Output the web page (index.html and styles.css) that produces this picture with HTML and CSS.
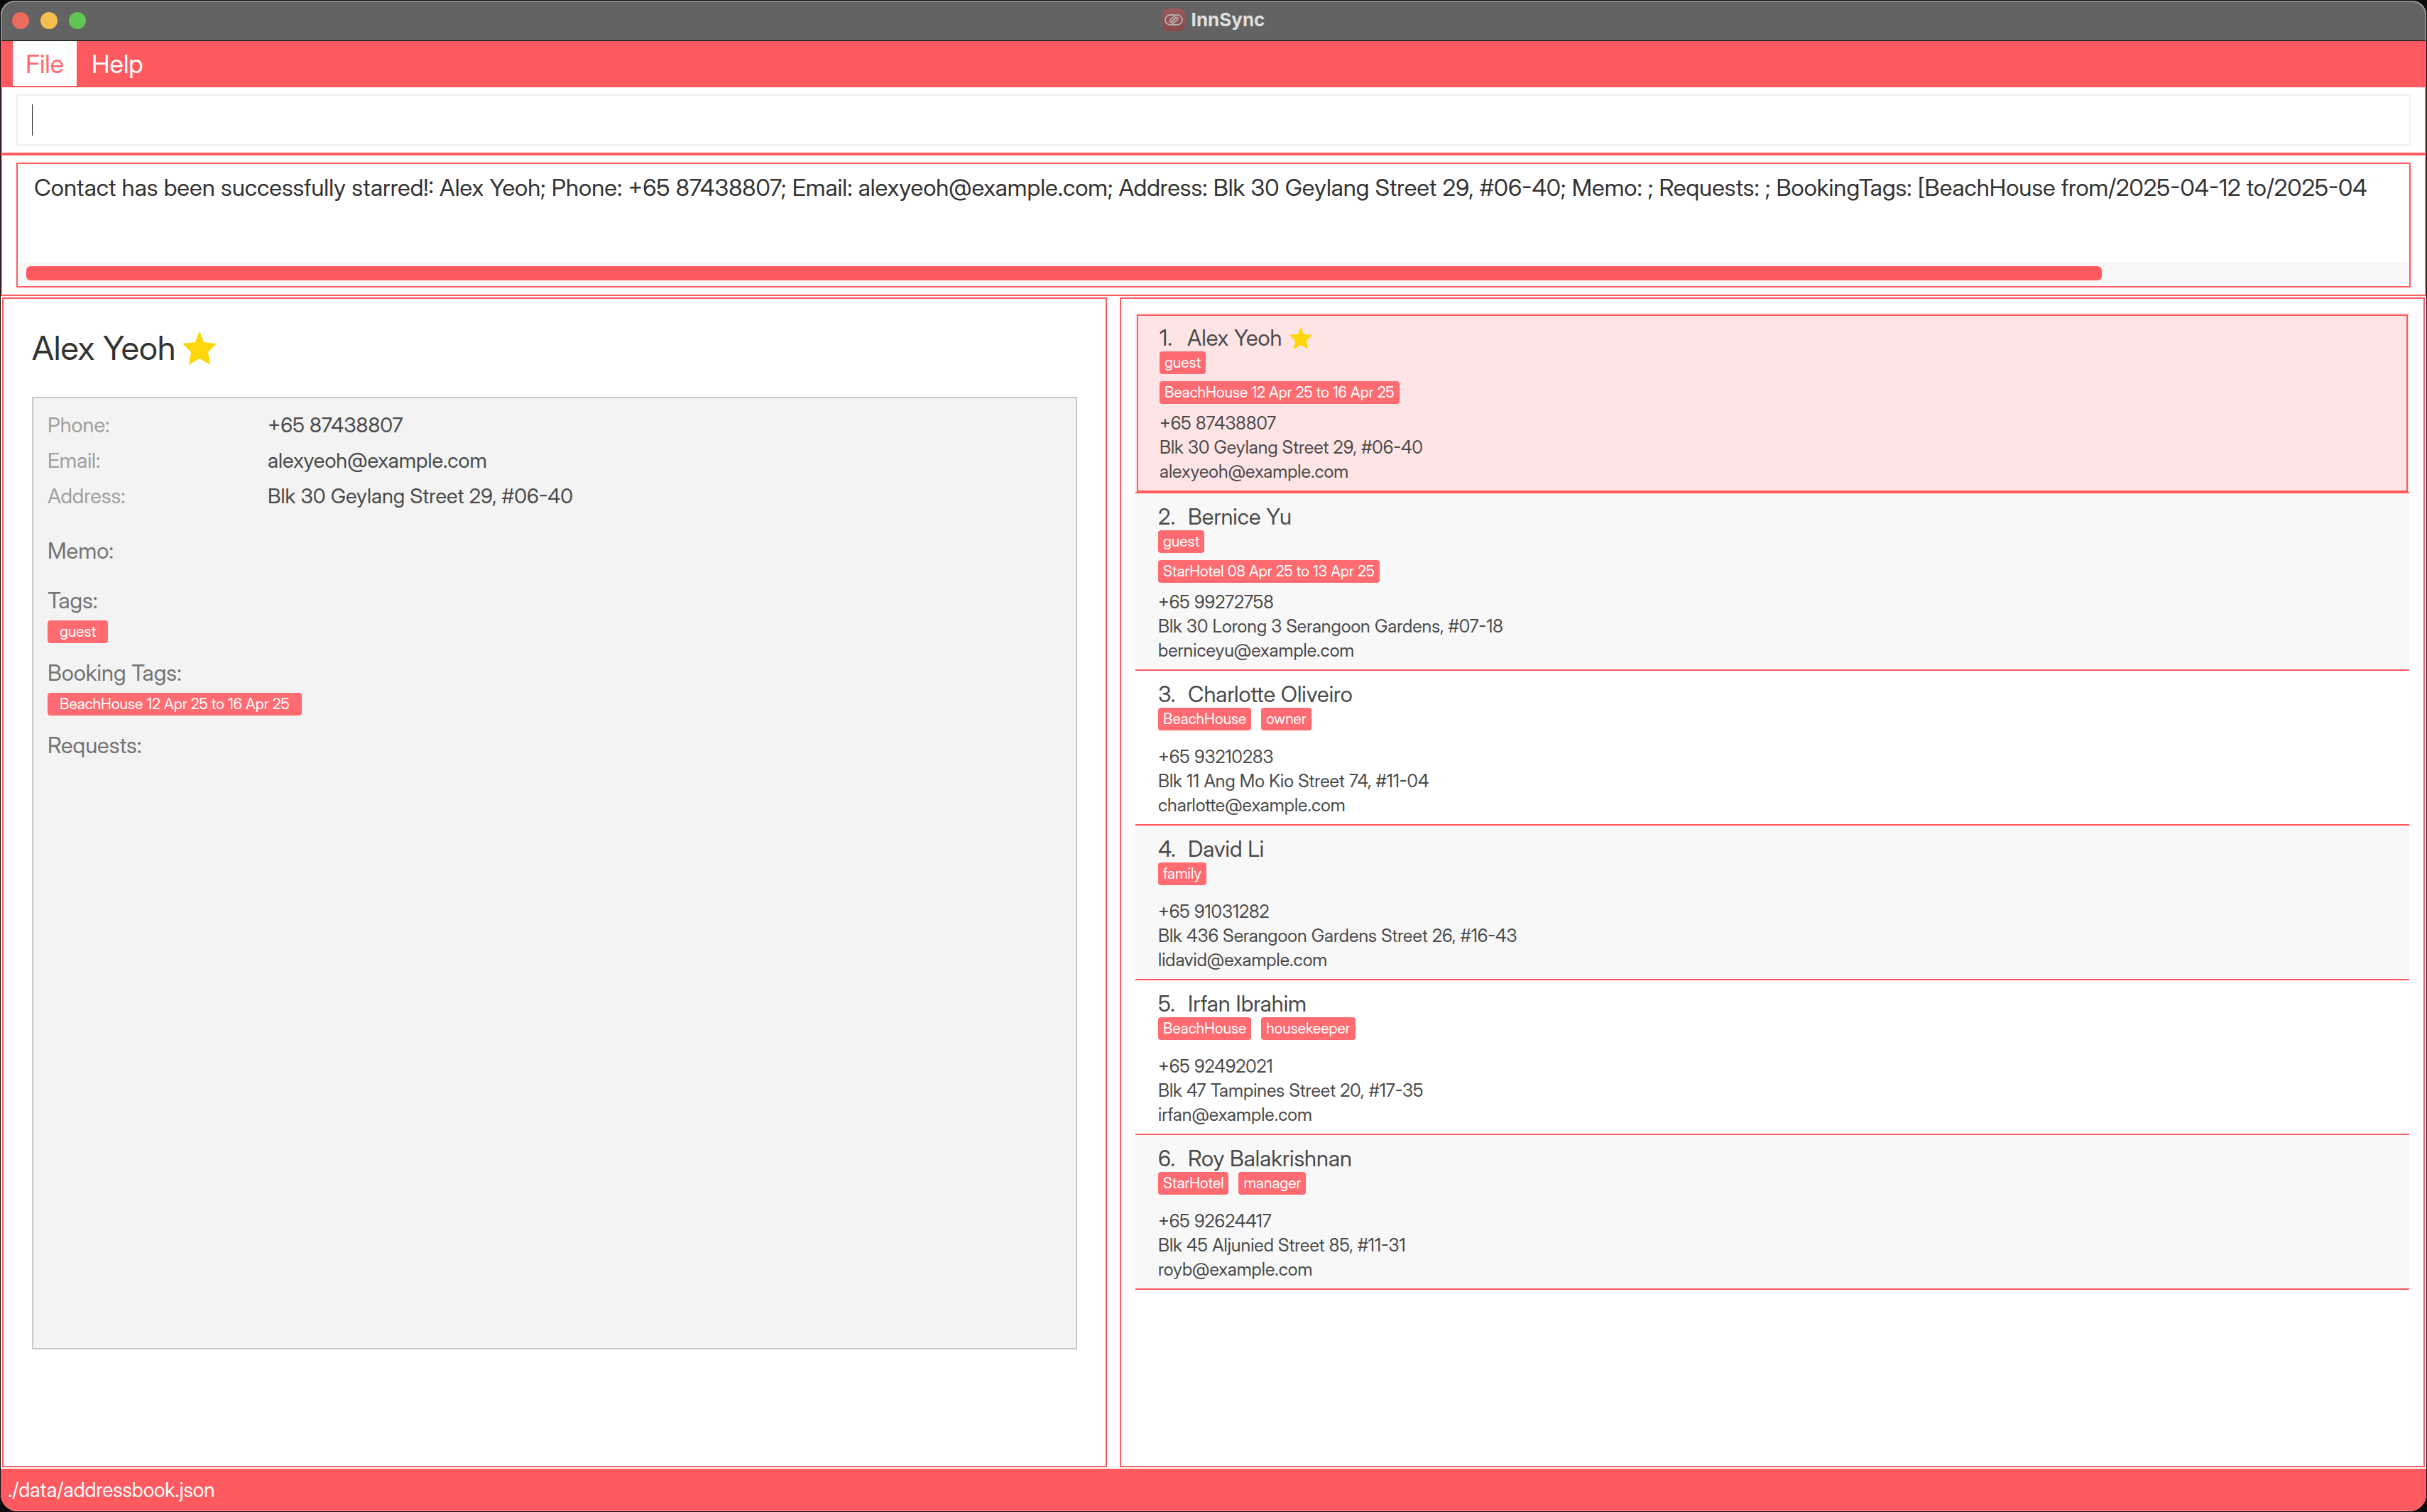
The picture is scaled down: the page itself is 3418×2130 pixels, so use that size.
FILE: index.html
```html
<!DOCTYPE html>
<html lang="en">
<head>
<meta charset="utf-8">
<title>InnSync</title>
<link rel="stylesheet" href="styles.css">
</head>
<body>
<div class="window">
  <header class="titlebar">
    <div class="lights">
      <button class="light close" type="button" aria-label="Close"></button>
      <button class="light minimise" type="button" aria-label="Minimise"></button>
      <button class="light zoom" type="button" aria-label="Zoom"></button>
    </div>
    <h1 class="title">
      <svg class="logo" viewBox="0 0 32 32" aria-hidden="true">
        <defs><linearGradient id="logo-fill" x1="0" y1="0" x2="0" y2="1"><stop offset="0" stop-color="#9b5a5a"/><stop offset="1" stop-color="#874a4b"/></linearGradient></defs>
        <rect width="32" height="32" rx="8" fill="url(#logo-fill)"/>
        <g fill="none" stroke="#b9acac" stroke-width="1.8" stroke-linecap="round" stroke-linejoin="round">
          <path d="M17 9h-6a7 7 0 0 0 0 14c2 0 3-1 4-2l6-5c2-2 0-4-2-3"/>
          <path d="M15 23h6a7 7 0 0 0 0-14c-2 0-3 1-4 2l-6 5c-2 2 0 4 2 3"/>
          <path d="M13 19l6-6"/>
        </g>
      </svg>
      InnSync
    </h1>
  </header>

  <nav class="menubar">
    <button class="menu active" type="button">File</button>
    <button class="menu" type="button">Help</button>
  </nav>

  <div class="command">
    <input class="command-input" type="text" aria-label="Command" autofocus>
    <span class="caret"></span>
  </div>

  <section class="result">
    <div class="result-box">
      <p class="result-text">Contact has been successfully starred!: Alex Yeoh; Phone: +65 87438807; Email: alexyeoh@example.com; Address: Blk 30 Geylang Street 29, #06-40; Memo: ; Requests: ; BookingTags: [BeachHouse from/2025-04-12 to/2025-04</p>
      <div class="track"><div class="thumb"></div></div>
    </div>
  </section>

  <main class="panes">
    <section class="pane detail">
      <h2 class="detail-name">Alex Yeoh
        <svg class="star" viewBox="0 0 48 48" aria-label="Starred"><path d="M24 0l6 16 18 2-12 12 3 18-15-9-15 9 3-18L0 18l18-2z"/></svg>
      </h2>
      <div class="card">
        <dl class="facts">
          <dt>Phone:</dt><dd>+65 87438807</dd>
          <dt>Email:</dt><dd>alexyeoh@example.com</dd>
          <dt>Address:</dt><dd>Blk 30 Geylang Street 29, #06-40</dd>
        </dl>
        <h3 class="heading memo">Memo:</h3>
        <h3 class="heading">Tags:</h3>
        <div class="tags"><span class="tag">guest</span></div>
        <h3 class="heading">Booking Tags:</h3>
        <div class="tags"><span class="tag">BeachHouse 12 Apr 25 to 16 Apr 25</span></div>
        <h3 class="heading">Requests:</h3>
      </div>
    </section>

    <section class="pane list">
      <ol class="people">
        <li class="person selected">
          <h3 class="name"><span>1.</span>Alex Yeoh
            <svg class="star" viewBox="0 0 48 48" aria-label="Starred"><path d="M24 0l6 16 18 2-12 12 3 18-15-9-15 9 3-18L0 18l18-2z"/></svg>
          </h3>
          <div class="tags"><span class="tag">guest</span></div>
          <div class="tags bookings"><span class="tag">BeachHouse 12 Apr 25 to 16 Apr 25</span></div>
          <p>+65 87438807</p><p>Blk 30 Geylang Street 29, #06-40</p><p>alexyeoh@example.com</p>
        </li>
        <li class="person">
          <h3 class="name"><span>2.</span>Bernice Yu</h3>
          <div class="tags"><span class="tag">guest</span></div>
          <div class="tags bookings"><span class="tag">StarHotel 08 Apr 25 to 13 Apr 25</span></div>
          <p>+65 99272758</p><p>Blk 30 Lorong 3 Serangoon Gardens, #07-18</p><p>berniceyu@example.com</p>
        </li>
        <li class="person">
          <h3 class="name"><span>3.</span>Charlotte Oliveiro</h3>
          <div class="tags"><span class="tag">BeachHouse</span><span class="tag">owner</span></div>
          <div class="tags bookings"></div>
          <p>+65 93210283</p><p>Blk 11 Ang Mo Kio Street 74, #11-04</p><p>charlotte@example.com</p>
        </li>
        <li class="person">
          <h3 class="name"><span>4.</span>David Li</h3>
          <div class="tags"><span class="tag">family</span></div>
          <div class="tags bookings"></div>
          <p>+65 91031282</p><p>Blk 436 Serangoon Gardens Street 26, #16-43</p><p>lidavid@example.com</p>
        </li>
        <li class="person">
          <h3 class="name"><span>5.</span>Irfan Ibrahim</h3>
          <div class="tags"><span class="tag">BeachHouse</span><span class="tag">housekeeper</span></div>
          <div class="tags bookings"></div>
          <p>+65 92492021</p><p>Blk 47 Tampines Street 20, #17-35</p><p>irfan@example.com</p>
        </li>
        <li class="person">
          <h3 class="name"><span>6.</span>Roy Balakrishnan</h3>
          <div class="tags"><span class="tag">StarHotel</span><span class="tag">manager</span></div>
          <div class="tags bookings"></div>
          <p>+65 92624417</p><p>Blk 45 Aljunied Street 85, #11-31</p><p>royb@example.com</p>
        </li>
      </ol>
    </section>
  </main>

  <footer class="status">./data/addressbook.json</footer>
</div>
</body>
</html>
```

FILE: styles.css
```css
* { box-sizing: border-box; }

body, h1, h2, h3, p, dl, dd, ol { margin: 0; padding: 0; font-weight: 400; }

body {
  background: #0b0b0d;
  padding: 1px;
  font-family: "Inter Display", Inter, "Liberation Sans", sans-serif;
  color: #4a4a4a;
}

button, input { font: inherit; border: 0; padding: 0; }

.window {
  display: flex;
  flex-direction: column;
  min-height: calc(100vh - 2px);
  border-radius: 20px 20px 24px 24px;
  overflow: hidden;
  background: #fff;
}

.titlebar {
  display: grid;
  grid-template-columns: 1fr auto 1fr;
  align-items: center;
  height: 57px;
  padding: 0 14px 2px;
  background: #636363;
  border: 2px solid #8c8a8b;
  border-bottom: 1px solid #000;
  border-radius: 20px 20px 0 0;
}

.lights { display: flex; gap: 16px; }
.light { width: 24px; height: 24px; border-radius: 50%; }
.close { background: #ec6a5e; }
.minimise { background: #f4bf4f; }
.zoom { background: #61c554; }

.title {
  display: flex;
  align-items: center;
  gap: 9px;
  padding-bottom: 2px;
  font-family: Inter, "Liberation Sans", sans-serif;
  font-size: 26px;
  line-height: 32px;
  font-weight: 700;
  color: #e0e0e0;
}
.logo { width: 32px; height: 32px; }

.menubar {
  display: flex;
  gap: 3px;
  height: 65px;
  padding: 0 17px 2px;
  background: #ff5a5f;
}
.menu {
  padding: 0 18px;
  font-size: 36px;
  color: #fff;
  background: transparent;
}
.menu.active { background: #fff; color: #ff6b70; }

.command {
  position: relative;
  padding: 10px 20px;
  border: 2px solid #ff5a5f;
  border-width: 0 2px 4px;
}
.command-input {
  display: block;
  width: 100%;
  height: 72px;
  padding: 0 20px;
  border: 2px solid #f0f0f0;
  font-size: 33px;
  outline: 0;
  caret-color: transparent;
}
.caret {
  position: absolute;
  left: 42px;
  top: 24px;
  width: 1px;
  height: 44px;
  background: #222;
}

.result {
  padding: 10px 20px;
  border: 2px solid #ff5a5f;
  border-top: 0;
}
.result-box {
  display: flex;
  flex-direction: column;
  justify-content: space-between;
  height: 176px;
  padding: 10px 2px 4px;
  border: 2px solid #ff5a5f;
}
.result-text {
  padding-left: 21px;
  font-size: 33px;
  line-height: 46px;
  color: #333;
  white-space: nowrap;
  overflow: hidden;
}
.track { padding: 6px 10px 4px; background: #f7f7f7; border-radius: 4px; }
.thumb { width: 87.4%; height: 20px; border-radius: 6px; background: #ff5a5f; }

.panes {
  flex: 1;
  display: grid;
  grid-template-columns: 1556fr 1838fr;
  gap: 18px;
  padding: 2px;
}
.pane { border: 2px solid #ff5a5f; min-width: 0; }

.detail { padding: 40px 40px 164px; display: flex; flex-direction: column; }
.detail-name {
  display: flex;
  align-items: center;
  gap: 10px;
  font-size: 47px;
  line-height: 58px;
  color: #333;
}
.star { width: 48px; height: 48px; fill: #ffd60a; }

.card {
  flex: 1;
  margin-top: 40px;
  padding: 13px 20px;
  background: #f3f3f3;
  border: 2px solid #c8c8c8;
}
.facts {
  display: grid;
  grid-template-columns: 310px 1fr;
  font-size: 29px;
  line-height: 50px;
}
.facts dt { color: #a0a0a0; }
.heading { font-size: 31px; line-height: 40px; margin-top: 22px; color: #737373; }
.memo { margin: 32px 0 30px; }

.tags { display: flex; gap: 14px; }
.tag {
  padding: 0 7px;
  font-size: 21px;
  line-height: 32px;
  color: #fff;
  background: #ff6b70;
  border-radius: 4px;
}
.card .tag { padding: 0 17px; }
.card .tags { margin-top: 8px; }

.list { padding: 20px; }
.people { list-style: none; }
.person {
  padding: 14px 32px 10px;
  border-bottom: 2px solid #ff5a5f;
}
.person:nth-child(even) { background: #f8f8f8; }
.person.selected {
  padding: 16px 34px 12px;
  background: #ffe4e5;
  outline: 2px solid #ff5a5f;
  outline-offset: -4px;
}
.name { display: flex; align-items: center; font-size: 31px; line-height: 38px; }
.name span { width: 42px; }
.selected .name span { width: 39px; }
.name .star { width: 32px; height: 32px; margin-left: 10px; }
.bookings { margin: 10px 0; }
.person p { font-size: 25px; line-height: 34px; }

.status {
  height: 60px;
  padding-left: 10px;
  font-size: 28px;
  line-height: 60px;
  color: #fff;
  background: #ff5a5f;
  border-bottom: 2px solid #ff7b7f;
}
```
